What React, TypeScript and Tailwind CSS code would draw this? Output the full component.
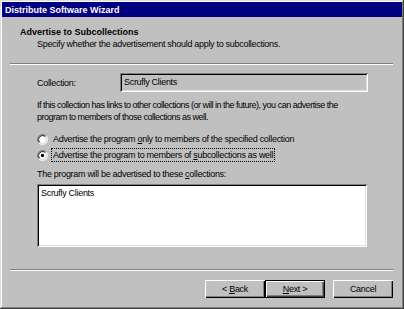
import React from 'react';

const sunken =
  'shadow-[inset_1px_1px_#808080,inset_-1px_-1px_#ffffff,inset_2px_2px_#000000,inset_-2px_-2px_#dfdfdf]';

function Radio({ checked }: { checked?: boolean }) {
  return (
    <svg width="11" height="11" viewBox="0 0 12 12" className="shrink-0">
      <circle cx="6" cy="6" r="4.5" fill="#ffffff" />
      <path d="M2.11 9.89 A5.5 5.5 0 0 1 9.89 2.11" fill="none" stroke="#808080" strokeWidth="1" />
      <path d="M9.89 2.11 A5.5 5.5 0 0 1 2.11 9.89" fill="none" stroke="#ffffff" strokeWidth="1" />
      <path d="M2.82 9.18 A4.5 4.5 0 0 1 9.18 2.82" fill="none" stroke="#000000" strokeWidth="1" />
      <path d="M9.18 2.82 A4.5 4.5 0 0 1 2.82 9.18" fill="none" stroke="#dfdfdf" strokeWidth="1" />
      {checked && <circle cx="6" cy="6" r="1.8" fill="#000000" />}
    </svg>
  );
}

function Button({ children, isDefault }: { children: React.ReactNode; isDefault?: boolean }) {
  return (
    <div
      className={`w-[60px] h-[18px] flex items-center justify-center bg-[#c0c0c0] ${
        isDefault
          ? 'border border-black shadow-[inset_1px_1px_#ffffff,inset_-1px_-1px_#404040,inset_-2px_-2px_#808080]'
          : 'shadow-[inset_1px_1px_#ffffff,inset_-1px_-1px_#000000,inset_-2px_-2px_#808080]'
      }`}
    >
      <span>{children}</span>
    </div>
  );
}

export default function App() {
  return (
    <div
      className="w-[404px] h-[309px] bg-[#c0c0c0] p-[2px] flex flex-col text-black text-[9px] leading-[12px] tracking-[-0.3px] shadow-[inset_-1px_-1px_#404040,inset_1px_1px_#dfdfdf,inset_-2px_-2px_#808080,inset_2px_2px_#ffffff]"
      style={{ fontFamily: '"Liberation Sans", Arial, sans-serif' }}
    >
      <div className="h-[15px] bg-[#000080] text-white font-bold text-[9px] tracking-normal flex items-center pl-[3px] whitespace-nowrap">
        Distribute Software Wizard
      </div>

      <div className="pl-[18px] pt-[9px] whitespace-nowrap">
        <div className="font-bold tracking-normal">Advertise to Subcollections</div>
        <div className="pl-[17px]">Specify whether the advertisement should apply to subcollections.</div>
      </div>

      <div className="mt-[13px] ml-[8px] mr-[9px] h-[2px] border-t border-b border-t-[#808080] border-b-white" />

      <div className="pl-[35px] flex flex-col whitespace-nowrap">
        <div className="mt-[8px] flex items-center">
          <div className="w-[83px]">Collection:</div>
          <div className={`w-[248px] h-[19px] bg-[#c0c0c0] flex items-center pl-[4px] pb-[1px] ${sunken}`}>
            <span>Scrufly Clients</span>
          </div>
        </div>

        <div className="mt-[7px] tracking-[-0.5px]">
          If this collection has links to other collections (or will in the future), you can advertise the
          <br />
          program to members of those collections as well.
        </div>

        <div className="mt-[9px] h-[14px] flex items-center gap-[4px]">
          <Radio />
          <span className="px-[1px]">
            Advertise the program <u>o</u>nly to members of the specified collection
          </span>
        </div>
        <div className="mt-[2px] h-[14px] flex items-center gap-[3px]">
          <Radio checked />
          <span className="inline-block h-[14px] px-[1px] border border-dotted border-black">
            Advertise the program to members of <u>s</u>ubcollections as well
          </span>
        </div>

        <div className="mt-[6px]">
          The program will be advertised to these <u>c</u>ollections:
        </div>
        <div className={`mt-[4px] w-[330px] h-[63px] bg-white pl-[4px] pt-[3px] ${sunken}`}>
          Scrufly Clients
        </div>
      </div>

      <div className="mt-[22px] ml-[8px] mr-[9px] h-[2px] border-t border-b border-t-[#808080] border-b-white" />

      <div className="mt-[9px] pr-[9px] flex justify-end">
        <Button>
          &lt; <u>B</u>ack
        </Button>
        <Button isDefault>
          <u>N</u>ext &gt;
        </Button>
        <div className="ml-[8px]">
          <Button>Cancel</Button>
        </div>
      </div>
    </div>
  );
}
